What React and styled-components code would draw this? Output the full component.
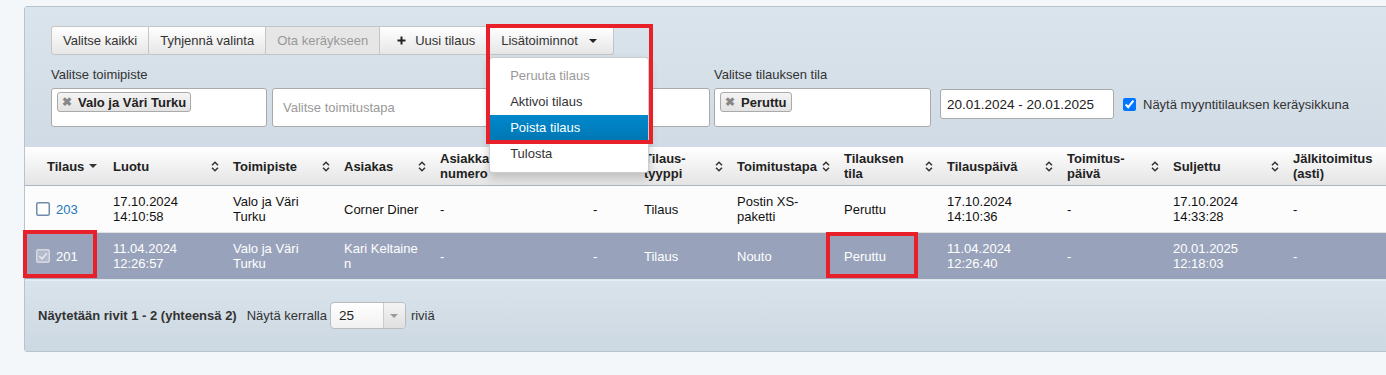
import React from 'react'
import styled, { createGlobalStyle } from 'styled-components'

const GlobalStyle = createGlobalStyle`
  body {
    margin: 0;
    background: #f4f7fa;
    font-family: "Liberation Sans", Arial, sans-serif;
    font-size: 13px;
    color: #333;
  }
`

const Page = styled.div`
  width: 100vw;
  height: 375px;
  overflow: hidden;
  padding: 6px 0 0 24px;
  box-sizing: border-box;
`

const Panel = styled.section`
  width: 1420px;
  border: 1px solid #b7c4d0;
  border-radius: 3px;
  background: #d3dee7;
`

const Controls = styled.div`
  padding: 19px 0 20px 26px;
  background: linear-gradient(#dae4ec, #d0dbe5);
`

const Toolbar = styled.div`
  display: flex;
  height: 29px;
`

const ToolButton = styled.button`
  display: inline-flex;
  align-items: center;
  gap: ${(p) => p.$gap || 0}px;
  height: 29px;
  padding: ${(p) => p.$pad || '0 11px'};
  font: 13px "Liberation Sans", Arial, sans-serif;
  color: ${(p) => (p.disabled ? '#999' : '#333')};
  background: ${(p) =>
    p.disabled ? '#e6e6e6' : 'linear-gradient(#ffffff, #e6e6e6)'};
  border: 1px solid #c5c5c5;
  border-left-width: ${(p) => (p.$first ? '1px' : '0')};
  border-radius: ${(p) => (p.$first ? '3px 0 0 3px' : p.$last ? '0 3px 3px 0' : '0')};
  cursor: default;
`

const MenuWrap = styled.div`
  position: relative;
  display: flex;
`

const Menu = styled.ul`
  position: absolute;
  top: 31px;
  left: 1px;
  z-index: 10;
  width: 160px;
  box-sizing: border-box;
  margin: 0;
  padding: 5px 0;
  list-style: none;
  background: #fff;
  border: 1px solid rgba(0, 0, 0, 0.2);
  border-radius: 4px;
  box-shadow: 0 5px 10px rgba(0, 0, 0, 0.2);
`

const MenuItem = styled.li`
  height: 26px;
  line-height: 26px;
  padding: 0 20px;
  color: ${(p) => (p.$disabled ? '#999' : p.$active ? '#fff' : '#333')};
  background: ${(p) =>
    p.$active ? 'linear-gradient(#0088cc, #0077b3)' : 'transparent'};
`

const Mark = styled.div`
  position: absolute;
  top: ${(p) => p.$top}px;
  left: ${(p) => p.$left}px;
  width: ${(p) => p.$w}px;
  height: ${(p) => p.$h}px;
  box-sizing: border-box;
  border: 4px solid #e8202a;
  pointer-events: none;
  z-index: 20;
`

const Filters = styled.div`
  display: flex;
  align-items: flex-start;
  margin-top: 12px;
`

const Field = styled.div`
  width: ${(p) => p.$w}px;
  margin-right: ${(p) => p.$gap}px;
`

const Label = styled.div`
  line-height: 15px;
  margin-bottom: 6px;
  color: #333;
`

const SelectBox = styled.div`
  display: flex;
  align-items: ${(p) => (p.$empty ? 'center' : 'flex-start')};
  height: 39px;
  box-sizing: border-box;
  padding: ${(p) => (p.$empty ? '0 10px' : '3px 5px')};
  background: #fff;
  border: 1px solid #aaa;
  border-radius: 3px;
  color: #999;
`

const Chip = styled.span`
  display: inline-flex;
  align-items: center;
  height: 20px;
  box-sizing: border-box;
  padding: 0 4px 0 4px;
  border: 1px solid #aaa;
  border-radius: 3px;
  background: linear-gradient(#f4f4f4, #e3e3e3);
  font-weight: bold;
  color: #222;

  & b {
    color: #888;
    font-size: 12px;
    margin-right: 6px;
  }
`

const DateInput = styled.div`
  width: 174px;
  height: 30px;
  box-sizing: border-box;
  margin: 22px 9px 0 9px;
  padding-left: 6px;
  display: flex;
  align-items: center;
  background: #fff;
  border: 1px solid #aaa;
  border-radius: 3px;
  font-size: 13.5px;
  color: #222;
`

const CheckLabel = styled.label`
  display: flex;
  align-items: center;
  height: 30px;
  margin-top: 22px;
  color: #333;

  & input {
    width: 13px;
    height: 13px;
    margin: 0 7px 0 0;
    accent-color: #0075ff;
  }
`

const Table = styled.table`
  border-collapse: collapse;
  table-layout: fixed;
  width: 1400px;
`

const Th = styled.th`
  height: 38px;
  padding: ${(p) => (p.$first ? '0 6px 0 22px' : '0 6px 0 8px')};
  text-align: left;
  vertical-align: middle;
  font-weight: bold;
  line-height: 15px;
  color: #222;
  background: linear-gradient(#ffffff, #e4e4e4);
  border-bottom: 1px solid #a8b6c3;
`

const HeadInner = styled.div`
  display: flex;
  align-items: center;
  justify-content: ${(p) => (p.$tight ? 'flex-start' : 'space-between')};
  gap: 5px;
`

const Row = styled.tr`
  background: ${(p) => (p.$selected ? '#98a3bb' : '#fcfcfc')};
  color: ${(p) => (p.$selected ? '#fff' : '#111')};
`

const Td = styled.td`
  position: relative;
  height: 46px;
  padding: ${(p) => (p.$first ? '0 6px 0 11px' : '0 10px 0 8px')};
  vertical-align: middle;
  line-height: 15px;
  border-bottom: 1px solid ${(p) => (p.$selected ? '#dfe6ec' : '#e2e2e2')};
  word-break: ${(p) => (p.$breakAll ? 'break-all' : 'normal')};
`

const IdCell = styled.div`
  display: flex;
  align-items: center;
  gap: 6px;
`

const OrderLink = styled.span`
  color: ${(p) => (p.$selected ? '#fff' : '#2277bb')};
`

const Footer = styled.div`
  display: flex;
  align-items: center;
  padding: 21px 13px 22px;
  background: linear-gradient(#d9e3eb, #ccd8e2);
  border-top: 1px solid #e6edf2;
  color: #333;
`

const Summary = styled.span`
  font-weight: bold;
  margin-right: 10px;
`

const PageSize = styled.div`
  display: flex;
  width: 76px;
  height: 27px;
  box-sizing: border-box;
  margin: 0 5px 0 3px;
  background: linear-gradient(#ffffff, #f1f1f1);
  border: 1px solid #bbb;
  border-radius: 4px;
  color: #222;
`

const PageSizeValue = styled.span`
  flex: 1;
  padding-left: 8px;
  line-height: 25px;
  font-size: 13.5px;
`

const PageSizeArrow = styled.span`
  width: 21px;
  display: flex;
  align-items: center;
  justify-content: center;
  border-left: 1px solid #ccc;
  border-radius: 0 3px 3px 0;
  background: linear-gradient(#f4f4f4, #e0e0e0);
`

function SortIcon() {
  return (
    <svg width="8" height="11" viewBox="0 0 8 11" style={{ flex: 'none' }}>
      <path d="M1 4.2 L4 1.2 L7 4.2 M1 6.8 L4 9.8 L7 6.8" fill="none" stroke="#333" strokeWidth="1.5" />
    </svg>
  )
}

function Caret({ color = '#333' }) {
  return (
    <svg width="8" height="4" viewBox="0 0 8 4" style={{ flex: 'none' }}>
      <path d="M0 0 L8 0 L4 4 Z" fill={color} />
    </svg>
  )
}

function PlusIcon() {
  return (
    <svg width="9" height="9" viewBox="0 0 9 9">
      <path d="M4.5 0.5 V8.5 M0.5 4.5 H8.5" stroke="#222" strokeWidth="2" />
    </svg>
  )
}

function RowCheck({ checked }) {
  if (checked) {
    return (
      <svg width="14" height="14" viewBox="0 0 14 14" style={{ flex: 'none' }}>
        <rect x="0.75" y="0.75" width="12.5" height="12.5" rx="1.5" fill="#b3bacb" stroke="#d6d9e1" strokeWidth="1.5" />
        <path d="M3.3 7.2 L6 9.8 L10.8 4.2" fill="none" stroke="#e6e8ee" strokeWidth="1.6" />
      </svg>
    )
  }
  return (
    <svg width="14" height="14" viewBox="0 0 14 14" style={{ flex: 'none' }}>
      <rect x="0.75" y="0.75" width="12.5" height="12.5" rx="1.5" fill="#fff" stroke="#6f8ca8" strokeWidth="1.5" />
    </svg>
  )
}

const columns = [
  { label: ['Tilaus'], w: 80, sorted: true },
  { label: ['Luotu'], w: 120 },
  { label: ['Toimipiste'], w: 111 },
  { label: ['Asiakas'], w: 96 },
  { label: ['Asiakkaan', 'numero'], w: 153 },
  { label: ['Viite'], w: 51 },
  { label: ['Tilaus-', 'tyyppi'], w: 93 },
  { label: ['Toimitustapa'], w: 107 },
  { label: ['Tilauksen', 'tila'], w: 103 },
  { label: ['Tilauspäivä'], w: 120 },
  { label: ['Toimitus-', 'päivä'], w: 106 },
  { label: ['Suljettu'], w: 120 },
  { label: ['Jälkitoimitus', '(asti)'], w: 140, noSort: true },
]

const rows = [
  {
    id: '203',
    created: ['17.10.2024', '14:10:58'],
    office: 'Valo ja Väri Turku',
    customer: 'Corner Diner',
    customerNo: '-',
    reference: '-',
    type: 'Tilaus',
    delivery: 'Postin XS-paketti',
    status: 'Peruttu',
    orderDate: ['17.10.2024', '14:10:36'],
    deliveryDate: '-',
    closed: ['17.10.2024', '14:33:28'],
    backorder: '-',
  },
  {
    id: '201',
    selected: true,
    created: ['11.04.2024', '12:26:57'],
    office: 'Valo ja Väri Turku',
    customer: 'Kari Keltainen',
    customerNo: '-',
    reference: '-',
    type: 'Tilaus',
    delivery: 'Nouto',
    status: 'Peruttu',
    orderDate: ['11.04.2024', '12:26:40'],
    deliveryDate: '-',
    closed: ['20.01.2025', '12:18:03'],
    backorder: '-',
  },
]

const Lines = ({ value }) =>
  Array.isArray(value) ? (
    <>
      {value[0]}
      <br />
      {value[1]}
    </>
  ) : (
    value
  )

function HeaderCell({ col, first }) {
  return (
    <Th $first={first}>
      <HeadInner $tight={col.sorted || col.noSort}>
        <span>
          {col.label.map((l, i) => (
            <React.Fragment key={l}>
              {i > 0 && <br />}
              {l}
            </React.Fragment>
          ))}
        </span>
        {col.sorted ? <Caret /> : !col.noSort && <SortIcon />}
      </HeadInner>
    </Th>
  )
}

export default function App() {
  return (
    <>
      <GlobalStyle />
      <Page>
        <Panel>
          <Controls>
            <Toolbar>
              <ToolButton $first>Valitse kaikki</ToolButton>
              <ToolButton>Tyhjennä valinta</ToolButton>
              <ToolButton disabled>Ota keräykseen</ToolButton>
              <ToolButton $pad="0 12px 0 17px" $gap={9}>
                <PlusIcon />
                Uusi tilaus
              </ToolButton>
              <MenuWrap>
                <ToolButton $last $pad="0 16px 0 13px" $gap={11}>
                  Lisätoiminnot
                  <Caret color="#222" />
                </ToolButton>
                <Menu>
                  <MenuItem $disabled>Peruuta tilaus</MenuItem>
                  <MenuItem>Aktivoi tilaus</MenuItem>
                  <MenuItem $active>Poista tilaus</MenuItem>
                  <MenuItem>Tulosta</MenuItem>
                </Menu>
                <Mark $top={-2} $left={-2} $w={167} $h={120} />
              </MenuWrap>
            </Toolbar>

            <Filters>
              <Field $w={216} $gap={5}>
                <Label>Valitse toimipiste</Label>
                <SelectBox>
                  <Chip>
                    <b>✖</b>Valo ja Väri Turku
                  </Chip>
                </SelectBox>
              </Field>
              <Field $w={216} $gap={5}>
                <Label>&nbsp;</Label>
                <SelectBox $empty>Valitse toimitustapa</SelectBox>
              </Field>
              <Field $w={217} $gap={4}>
                <Label>&nbsp;</Label>
                <SelectBox $empty />
              </Field>
              <Field $w={217} $gap={0}>
                <Label>Valitse tilauksen tila</Label>
                <SelectBox>
                  <Chip>
                    <b>✖</b>Peruttu
                  </Chip>
                </SelectBox>
              </Field>
              <DateInput>20.01.2024 - 20.01.2025</DateInput>
              <CheckLabel>
                <input type="checkbox" defaultChecked />
                Näytä myyntitilauksen keräysikkuna
              </CheckLabel>
            </Filters>
          </Controls>

          <Table>
            <colgroup>
              {columns.map((c, i) => (
                <col key={i} style={{ width: c.w }} />
              ))}
            </colgroup>
            <thead>
              <tr>
                {columns.map((c, i) => (
                  <HeaderCell key={i} col={c} first={i === 0} />
                ))}
              </tr>
            </thead>
            <tbody>
              {rows.map((r) => (
                <Row key={r.id} $selected={r.selected}>
                  <Td $first $selected={r.selected}>
                    <IdCell>
                      <RowCheck checked={r.selected} />
                      <OrderLink $selected={r.selected}>{r.id}</OrderLink>
                    </IdCell>
                    {r.selected && <Mark $top={-3} $left={-2} $w={74} $h={48} />}
                  </Td>
                  <Td $selected={r.selected}>
                    <Lines value={r.created} />
                  </Td>
                  <Td $selected={r.selected}>{r.office}</Td>
                  <Td $selected={r.selected} $breakAll>
                    {r.customer}
                  </Td>
                  <Td $selected={r.selected}>{r.customerNo}</Td>
                  <Td $selected={r.selected}>{r.reference}</Td>
                  <Td $selected={r.selected}>{r.type}</Td>
                  <Td $selected={r.selected}>{r.delivery}</Td>
                  <Td $selected={r.selected}>
                    {r.status}
                    {r.selected && <Mark $top={-1} $left={-10} $w={92} $h={46} />}
                  </Td>
                  <Td $selected={r.selected}>
                    <Lines value={r.orderDate} />
                  </Td>
                  <Td $selected={r.selected}>{r.deliveryDate}</Td>
                  <Td $selected={r.selected}>
                    <Lines value={r.closed} />
                  </Td>
                  <Td $selected={r.selected}>{r.backorder}</Td>
                </Row>
              ))}
            </tbody>
          </Table>

          <Footer>
            <Summary>Näytetään rivit 1 - 2 (yhteensä 2)</Summary>
            Näytä kerralla
            <PageSize>
              <PageSizeValue>25</PageSizeValue>
              <PageSizeArrow>
                <Caret color="#999" />
              </PageSizeArrow>
            </PageSize>
            riviä
          </Footer>
        </Panel>
      </Page>
    </>
  )
}
